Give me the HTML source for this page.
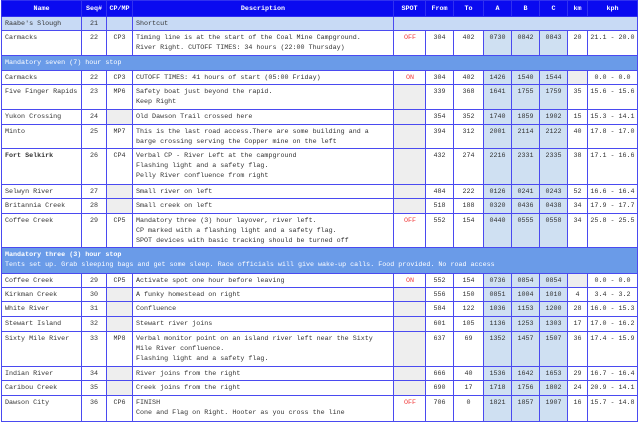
<!DOCTYPE html>
<html><head><meta charset="utf-8"><style>
body{margin:0;background:#fff;width:640px;height:423px;overflow:hidden}
table{position:absolute;left:1px;top:0;border-collapse:collapse;table-layout:fixed;width:637px;font-family:"Liberation Mono",monospace;font-size:6.7px;color:#333}
td,th{border:1px solid #4a4af0;padding:2px 2px 0 3px;vertical-align:top;line-height:10px;overflow:hidden;white-space:nowrap}
th{background:#0a0af0;color:#fff;font-weight:bold;text-align:center;vertical-align:middle;padding:0;border-color:#3030f0}
.c{text-align:center;padding-left:0;padding-right:0}
.g{background:#eee}
.abc{background:#cfe0f2;text-align:center;padding-left:0;padding-right:0}
.r{color:#f03a3a;text-align:center}
.sec td{background:#6a9be8;color:#fff;padding-left:3px}
.light td{background:#c8daf5}
.b{font-weight:bold}
</style></head><body>
<table>
<colgroup><col style="width:80px"><col style="width:25px"><col style="width:26px"><col style="width:261px"><col style="width:32px"><col style="width:28px"><col style="width:30px"><col style="width:28px"><col style="width:28px"><col style="width:28px"><col style="width:20px"><col style="width:50px"></colgroup>
<tr style="height:16px"><th>Name</th><th>Seq#</th><th>CP/MP</th><th>Description</th><th>SPOT</th><th>From</th><th>To</th><th>A</th><th>B</th><th>C</th><th>km</th><th>kph</th></tr>
<tr class="light" style="height:14px"><td>Raabe's Slough</td><td class="c">21</td><td></td><td>Shortcut</td><td colspan="8"></td></tr>
<tr style="height:25px"><td>Carmacks</td><td class="c">22</td><td class="c">CP3</td><td>Timing line is at the start of the Coal Mine Campground.<br>River Right. CUTOFF TIMES: 34 hours (22:00 Thursday)</td><td class="r">OFF</td><td class="c">304</td><td class="c">402</td><td class="abc">0730</td><td class="abc">0842</td><td class="abc">0843</td><td class="c">20</td><td class="c">21.1 - 20.0</td></tr>
<tr class="sec" style="height:15px"><td colspan="12">Mandatory seven (7) hour stop</td></tr>
<tr style="height:14px"><td>Carmacks</td><td class="c">22</td><td class="c">CP3</td><td>CUTOFF TIMES: 41 hours of start (05:00 Friday)</td><td class="r">ON</td><td class="c">304</td><td class="c">402</td><td class="abc">1426</td><td class="abc">1540</td><td class="abc">1544</td><td class="g"></td><td class="c">0.0 - 0.0</td></tr>
<tr style="height:25px"><td>Five Finger Rapids</td><td class="c">23</td><td class="c">MP6</td><td>Safety boat just beyond the rapid.<br>Keep Right</td><td class="g"></td><td class="c">339</td><td class="c">368</td><td class="abc">1641</td><td class="abc">1755</td><td class="abc">1759</td><td class="c">35</td><td class="c">15.6 - 15.6</td></tr>
<tr style="height:15px"><td>Yukon Crossing</td><td class="c">24</td><td class="g"></td><td>Old Dawson Trail crossed here</td><td class="g"></td><td class="c">354</td><td class="c">352</td><td class="abc">1740</td><td class="abc">1859</td><td class="abc">1902</td><td class="c">15</td><td class="c">15.3 - 14.1</td></tr>
<tr style="height:24px"><td>Minto</td><td class="c">25</td><td class="c">MP7</td><td>This is the last road access.There are some building and a<br>barge crossing serving the Copper mine on the left</td><td class="g"></td><td class="c">394</td><td class="c">312</td><td class="abc">2001</td><td class="abc">2114</td><td class="abc">2122</td><td class="c">40</td><td class="c">17.8 - 17.0</td></tr>
<tr style="height:36px"><td class="b">Fort Selkirk</td><td class="c">26</td><td class="c">CP4</td><td>Verbal CP - River Left at the campground<br>Flashing light and a safety flag.<br>Pelly River confluence from right</td><td class="g"></td><td class="c">432</td><td class="c">274</td><td class="abc">2216</td><td class="abc">2331</td><td class="abc">2335</td><td class="c">38</td><td class="c">17.1 - 16.6</td></tr>
<tr style="height:14px"><td>Selwyn River</td><td class="c">27</td><td class="g"></td><td>Small river on left</td><td class="g"></td><td class="c">484</td><td class="c">222</td><td class="abc">0126</td><td class="abc">0241</td><td class="abc">0243</td><td class="c">52</td><td class="c">16.6 - 16.4</td></tr>
<tr style="height:15px"><td>Britannia Creek</td><td class="c">28</td><td class="g"></td><td>Small creek on left</td><td class="g"></td><td class="c">518</td><td class="c">188</td><td class="abc">0320</td><td class="abc">0436</td><td class="abc">0438</td><td class="c">34</td><td class="c">17.9 - 17.7</td></tr>
<tr style="height:34px"><td>Coffee Creek</td><td class="c">29</td><td class="c">CP5</td><td>Mandatory three (3) hour layover, river left.<br>CP marked with a flashing light and a safety flag.<br>SPOT devices with basic tracking should be turned off</td><td class="r">OFF</td><td class="c">552</td><td class="c">154</td><td class="abc">0440</td><td class="abc">0555</td><td class="abc">0558</td><td class="c">34</td><td class="c">25.8 - 25.5</td></tr>
<tr class="sec" style="height:26px"><td colspan="12"><b>Mandatory three (3) hour stop</b><br>Tents set up. Grab sleeping bags and get some sleep. Race officials will give wake-up calls. Food provided. No road access</td></tr>
<tr style="height:14px"><td>Coffee Creek</td><td class="c">29</td><td class="c">CP5</td><td>Activate spot one hour before leaving</td><td class="r">ON</td><td class="c">552</td><td class="c">154</td><td class="abc">0736</td><td class="abc">0854</td><td class="abc">0854</td><td class="g"></td><td class="c">0.0 - 0.0</td></tr>
<tr style="height:14px"><td>Kirkman Creek</td><td class="c">30</td><td class="g"></td><td>A funky homestead on right</td><td class="g"></td><td class="c">556</td><td class="c">150</td><td class="abc">0851</td><td class="abc">1004</td><td class="abc">1010</td><td class="c">4</td><td class="c">3.4 - 3.2</td></tr>
<tr style="height:15px"><td>White River</td><td class="c">31</td><td class="g"></td><td>Confluence</td><td class="g"></td><td class="c">584</td><td class="c">122</td><td class="abc">1036</td><td class="abc">1153</td><td class="abc">1200</td><td class="c">28</td><td class="c">16.0 - 15.3</td></tr>
<tr style="height:15px"><td>Stewart Island</td><td class="c">32</td><td class="g"></td><td>Stewart river joins</td><td class="g"></td><td class="c">601</td><td class="c">105</td><td class="abc">1136</td><td class="abc">1253</td><td class="abc">1303</td><td class="c">17</td><td class="c">17.0 - 16.2</td></tr>
<tr style="height:35px"><td>Sixty Mile River</td><td class="c">33</td><td class="c">MP8</td><td>Verbal monitor point on an island river left near the Sixty<br>Mile River confluence.<br>Flashing light and a safety flag.</td><td class="g"></td><td class="c">637</td><td class="c">69</td><td class="abc">1352</td><td class="abc">1457</td><td class="abc">1507</td><td class="c">36</td><td class="c">17.4 - 15.9</td></tr>
<tr style="height:14px"><td>Indian River</td><td class="c">34</td><td class="g"></td><td>River joins from the right</td><td class="g"></td><td class="c">666</td><td class="c">40</td><td class="abc">1536</td><td class="abc">1642</td><td class="abc">1653</td><td class="c">29</td><td class="c">16.7 - 16.4</td></tr>
<tr style="height:15px"><td>Caribou Creek</td><td class="c">35</td><td class="g"></td><td>Creek joins from the right</td><td class="g"></td><td class="c">690</td><td class="c">17</td><td class="abc">1718</td><td class="abc">1756</td><td class="abc">1802</td><td class="c">24</td><td class="c">20.9 - 14.1</td></tr>
<tr style="height:26px"><td>Dawson City</td><td class="c">36</td><td class="c">CP6</td><td>FINISH<br>Cone and Flag on Right. Hooter as you cross the line</td><td class="r">OFF</td><td class="c">706</td><td class="c">0</td><td class="abc">1821</td><td class="abc">1857</td><td class="abc">1907</td><td class="c">16</td><td class="c">15.7 - 14.8</td></tr>
</table>
</body></html>
